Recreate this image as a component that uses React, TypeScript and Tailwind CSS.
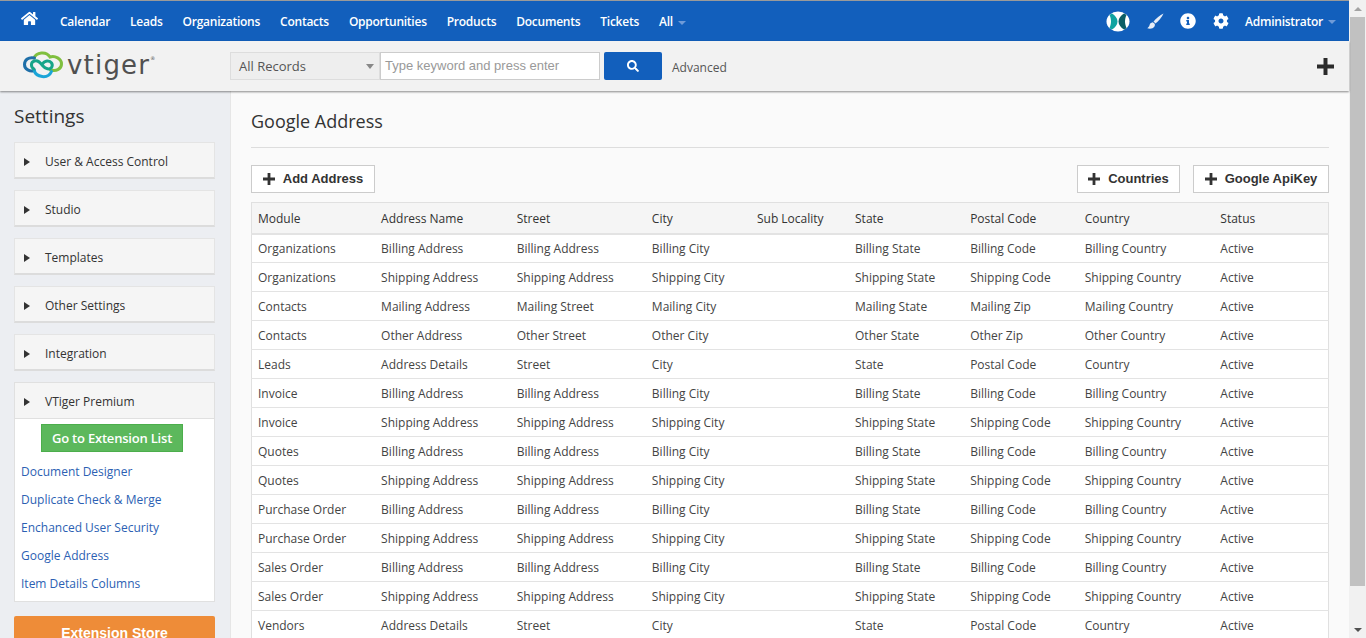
import React from "react";
import { FaCog, FaInfoCircle, FaSearch, FaHome } from "react-icons/fa";

const Plus = ({ s = 12 }: { s?: number }) => (
  <svg width={s} height={s} viewBox="0 0 12 12" className="shrink-0"><path d="M4.6 0h2.8v4.6H12v2.8H7.4V12H4.6V7.4H0V4.6h4.6z" fill="currentColor" /></svg>
);

const Logo = () => (
  <svg width="40" height="30" viewBox="0 0 40 30" className="shrink-0">
    <g fill="none" strokeWidth="3" strokeLinecap="round">
      <path d="M11 8C13 2.500 23 .5 27 7c5-1.500 11.500 1.500 11.500 7 0 5-5 7.500-11 6" stroke="#7fbf3f" />
      <path d="M11.500 8C5.500 6.500 1.500 10 1.500 14.500c0 5 5.500 7.500 10 6" stroke="#1f6fa8" />
      <path d="M11 20c2 7.500 14 9.500 17.500 1.500" stroke="#1ba5d8" />
      <path d="M11 19C7.500 17 7.500 12 11.500 11c4-1 6 2 8.500 5 2.500 3 6.500 4 8.500 1.500 2-3-.5-7-4.500-6.500-2.500.3-4 2-5 3.500" stroke="#17a589" />
    </g>
  </svg>
);

const nav = ["Calendar", "Leads", "Organizations", "Contacts", "Opportunities", "Products", "Documents", "Tickets"];
const sections = ["User & Access Control", "Studio", "Templates", "Other Settings", "Integration"];
const links = ["Document Designer", "Duplicate Check & Merge", "Enchanced User Security", "Google Address", "Item Details Columns"];
const headers = ["Module", "Address Name", "Street", "City", "Sub Locality", "State", "Postal Code", "Country", "Status"];
const widths = ["w-[123.5px]", "w-[135.5px]", "w-[135px]", "w-[105px]", "w-[98px]", "w-[115px]", "w-[114.5px]", "w-[135.5px]", "w-[114px]"];
const bill = ["Billing Address", "Billing Address", "Billing City", "", "Billing State", "Billing Code", "Billing Country", "Active"];
const ship = ["Shipping Address", "Shipping Address", "Shipping City", "", "Shipping State", "Shipping Code", "Shipping Country", "Active"];
const addr = ["Address Details", "Street", "City", "", "State", "Postal Code", "Country", "Active"];
const rows: string[][] = [
  ["Organizations", ...bill],
  ["Organizations", ...ship],
  ["Contacts", "Mailing Address", "Mailing Street", "Mailing City", "", "Mailing State", "Mailing Zip", "Mailing Country", "Active"],
  ["Contacts", "Other Address", "Other Street", "Other City", "", "Other State", "Other Zip", "Other Country", "Active"],
  ["Leads", ...addr],
  ["Invoice", ...bill],
  ["Invoice", ...ship],
  ["Quotes", ...bill],
  ["Quotes", ...ship],
  ["Purchase Order", ...bill],
  ["Purchase Order", ...ship],
  ["Sales Order", ...bill],
  ["Sales Order", ...ship],
  ["Vendors", ...addr],
];

const Section = ({ label, open }: { label: string; open?: boolean }) => (
  <div className={`flex items-center bg-[#f5f5f5] pl-[9px] pt-[3px] text-[12px] text-[#333] ${open ? "h-[36px] border-b border-[#e0e0e0]" : "h-[37px] border border-[#e4e4e4] border-b-2 border-b-[#dcdcdc]"}`}>
    <span className="mr-[15px] h-0 w-0 border-y-[4px] border-l-[6px] border-y-transparent border-l-[#333]" />
    <span>{label}</span>
  </div>
);

const ActionBtn = ({ label, className = "" }: { label: string; className?: string }) => (
  <button className={`flex h-[28px] items-center justify-center gap-[8px] border border-[#ccc] bg-white font-['Liberation_Sans',sans-serif] text-[13px] font-bold text-[#333] ${className}`}>
    <Plus />
    {label}
  </button>
);

export default function App() {
  return (
    <div className="flex h-[638px] w-[1366px] overflow-hidden bg-[#fafafa] font-['Open_Sans','Noto_Sans',sans-serif]">
      <div className="flex w-[1349px] shrink-0 flex-col">
        <div className="h-px shrink-0 bg-[#9a9a9a]" />
        <nav className="flex h-[40px] shrink-0 items-center bg-[#125fbc] text-[12px] font-semibold tracking-[-0.25px] text-white">
          <FaHome className="ml-[21px] mb-[5px] text-[17px]" />
          <div className="ml-[22px] mt-[1px] flex gap-[20px]">
            {nav.map((n) => <span key={n}>{n}</span>)}
            <span className="flex items-center gap-[5px]">All <span className="mt-[2px] h-0 w-0 border-x-[4px] border-t-[4px] border-x-transparent border-t-[#6f9bd8]" /></span>
          </div>
          <div className="ml-auto flex items-center">
            <svg width="24" height="21" viewBox="0 0 24 21" className="mr-[17px]">
              <ellipse cx="12" cy="10.500" rx="11.500" ry="10" fill="#fff" />
              <path d="M6 2.500c3 2 5.500 4.500 5.500 8s-2.500 6-5.500 8c-1.500-.5-2-1-2.500-1.500 1-2.500 1.500-4.500 1.500-6.500S4.500 6 3.500 4C4 3.500 5 3 6 2.500z" fill="#0fa3a0" />
              <path d="M18 2.500c-3 2-5.500 4.500-5.500 8s2.500 6 5.500 8c1.500-.5 2-1 2.500-1.500-1-2.500-1.500-4.500-1.500-6.500S19.500 6 20.500 4C20 3.500 19 3 18 2.500z" fill="#0b5e66" />
            </svg>
            <svg width="17" height="17" viewBox="0 0 17 17" className="mr-[16px]">
              <path d="M16.500.5C13 2 9 5.500 6.500 8.500l2 2C11.500 8 15 4 16.500.5z" fill="#e8eef7" />
              <path d="M5.800 9.300c-2 .3-3 1.500-3.300 3-.3 1.300-1 2-2.200 3 2.800 1 5.800.3 7-1.500.7-1 .7-2 .4-3z" fill="#e8eef7" />
            </svg>
            <FaInfoCircle className="mr-[17px] text-[16px]" />
            <FaCog className="mr-[16px] text-[16px]" />
            <span className="mt-[1px]">Administrator</span>
            <span className="ml-[5px] mr-[13px] mt-[2px] h-0 w-0 border-x-[4px] border-t-[4px] border-x-transparent border-t-[#6f9bd8]" />
          </div>
        </nav>
        <header className="relative z-10 flex h-[50px] shrink-0 items-center bg-[#f2f2f2] shadow-[0_1px_2px_rgba(0,0,0,0.45)]">
          <div className="ml-[23px] flex w-[207px] items-center gap-[4px] pb-[2px]">
            <Logo />
            <span className="font-['DejaVu_Sans',sans-serif] text-[26px] leading-none tracking-[1.200px] text-[#505050]">vtiger<sup className="top-[-14px] text-[5px]">®</sup></span>
          </div>
          <div className="flex h-[28px] w-[150px] items-center justify-between border border-[#ddd] bg-[#eeeeee] pl-[8px] pr-[5px] pt-[1px] text-[13px] text-[#555]">
            All Records
            <span className="h-0 w-0 border-x-[4px] border-t-[5px] border-x-transparent border-t-[#888]" />
          </div>
          <div className="flex h-[28px] w-[220px] items-center border border-[#ccc] bg-white px-[4px] pb-[1px] font-['Liberation_Sans',sans-serif] text-[13px] text-[#999]">Type keyword and press enter</div>
          <button className="ml-[4px] flex h-[28px] w-[58px] items-center justify-center rounded-[2px] bg-[#125fbc] text-[12px] text-white"><FaSearch /></button>
          <span className="ml-[10px] mt-[3px] text-[12px] text-[#555]">Advanced</span>
          <span className="ml-auto mr-[15px] text-[#2b2b2b]"><Plus s={17} /></span>
        </header>
        <div className="flex min-h-0 flex-1">
          <aside className="w-[231px] shrink-0 border-r border-[#e6e6e6] bg-[#eceef2] px-[14px]">
            <h2 className="mt-[12px] h-[39px] text-[19px] leading-[26px] text-[#333]">Settings</h2>
            <div className="flex w-[201px] flex-col gap-[11px]">
              {sections.map((s) => <Section key={s} label={s} />)}
              <div className="border border-[#e0e0e0] bg-white">
                <Section label="VTiger Premium" open />
                <div className="flex justify-center pr-[5px] pt-[5px]">
                  <button className="h-[28px] w-[142px] border border-[#4cae4c] bg-[#5cb85c] pt-[1px] text-[13px] font-semibold tracking-[-0.2px] text-white">Go to Extension List</button>
                </div>
                <div className="px-[6px] pb-[3px] pt-[6px] text-[12px] text-[#2c5fb3]">
                  {links.map((l) => <div key={l} className="flex h-[28px] items-center">{l}</div>)}
                </div>
              </div>
              <button className="mt-[3px] h-[40px] w-[201px] shrink-0 rounded-[2px] bg-[#ee8c38] pb-[5px] font-['Liberation_Sans',sans-serif] text-[14px] font-bold text-white">Extension Store</button>
            </div>
          </aside>
          <main className="min-w-0 flex-1 pl-[20px] pr-[20px]">
            <h1 className="flex h-[57px] items-center border-b border-[#ddd] pb-[2px] pt-[7px] text-[18px] text-[#333]">Google Address</h1>
            <div className="mt-[17px] flex h-[28px] items-center">
              <ActionBtn label="Add Address" className="w-[124px]" />
              <ActionBtn label="Countries" className="ml-auto w-[103px]" />
              <ActionBtn label="Google ApiKey" className="ml-[13px] w-[136px]" />
            </div>
            <table className="mt-[9px] w-[1078px] table-fixed border-collapse border border-[#e0e0e0] bg-white text-[12px] text-[#444]">
              <thead>
                <tr className="h-[31px] border-b-2 border-[#e3e3e3] bg-[#f5f5f5] text-left">
                  {headers.map((h, i) => <th key={h} className={`${widths[i]} pl-[6px] pt-[2px] text-[12px] font-normal text-[#333]`}>{h}</th>)}
                </tr>
              </thead>
              <tbody>
                {rows.map((r, i) => (
                  <tr key={i} className="h-[29px] border-b border-[#e3e3e3]">
                    {r.map((c, j) => <td key={j} className="whitespace-nowrap pl-[6px] pt-[2px]">{c}</td>)}
                  </tr>
                ))}
              </tbody>
            </table>
          </main>
        </div>
      </div>
      <div className="flex w-[17px] shrink-0 flex-col items-center bg-[#f1f1f1]">
        <div className="flex h-[17px] w-full items-center justify-center"><span className="h-0 w-0 border-x-[4px] border-b-[4px] border-x-transparent border-b-[#a3a3a3]" /></div>
        <div className="h-[569px] w-[15px] bg-[#c1c1c1]" />
        <div className="mt-auto flex h-[17px] w-full items-center justify-center"><span className="h-0 w-0 border-x-[4px] border-t-[4px] border-x-transparent border-t-[#505050]" /></div>
      </div>
    </div>
  );
}
